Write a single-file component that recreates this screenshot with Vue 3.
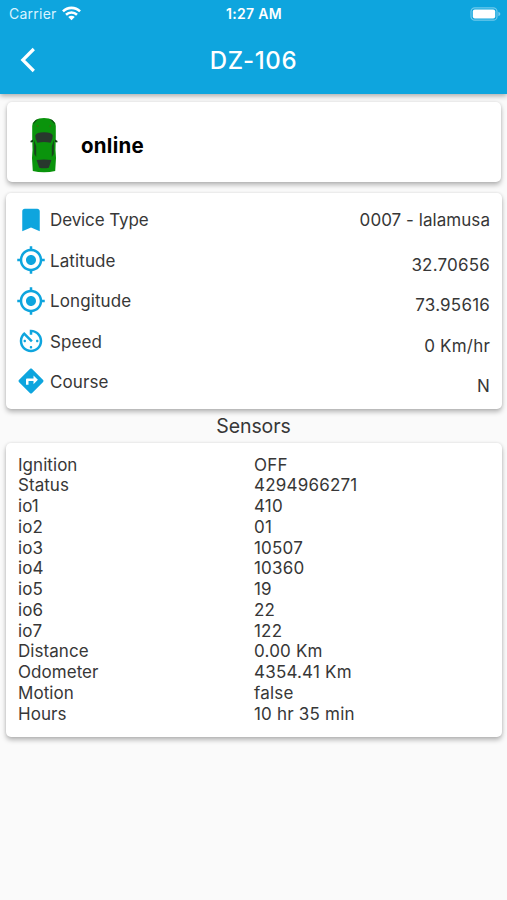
<script setup>
import { ref } from 'vue'

const device = ref({ name: 'DZ-106', status: 'online' })

const ICONS = {
  bookmark: 'M17 3H7c-1.1 0-1.99.9-1.99 2L5 21l7-3 7 3V5c0-1.1-.9-2-2-2z',
  gps: 'M12 8c-2.21 0-4 1.79-4 4s1.79 4 4 4 4-1.79 4-4-1.79-4-4-4zm8.94 3c-.46-4.17-3.77-7.48-7.94-7.94V1h-2v2.06C6.83 3.52 3.52 6.83 3.06 11H1v2h2.06c.46 4.17 3.77 7.48 7.94 7.94V23h2v-2.06c4.17-.46 7.48-3.77 7.94-7.94H23v-2h-2.06zM12 19c-3.87 0-7-3.13-7-7s3.13-7 7-7 7 3.13 7 7-3.13 7-7 7z',
  timer: 'M11 17c0 .55.45 1 1 1s1-.45 1-1-.45-1-1-1-1 .45-1 1zm0-14v4h2V5.08c3.39.49 6 3.39 6 6.92 0 3.87-3.13 7-7 7s-7-3.13-7-7c0-1.68.59-3.22 1.58-4.42L12 13l1.41-1.41-6.8-6.8v.02C4.42 6.45 3 9.05 3 12c0 4.97 4.02 9 9 9 4.97 0 9-4.03 9-9s-4.03-9-9-9h-1zm7 9c0-.55-.45-1-1-1s-1 .45-1 1 .45 1 1 1 1-.45 1-1zM6 12c0 .55.45 1 1 1s1-.45 1-1-.45-1-1-1-1 .45-1 1z',
  directions: 'M21.71 11.29l-9-9c-.39-.39-1.02-.39-1.41 0l-9 9c-.39.39-.39 1.02 0 1.41l9 9c.39.39 1.02.39 1.41 0l9-9c.39-.38.39-1.01 0-1.41zM14 14.5V12h-4v3H8v-4c0-.55.45-1 1-1h5V7.5l3.5 3.5-3.5 3.5z'
}

const details = ref([
  { label: 'Device Type', value: '0007 - lalamusa', icon: ICONS.bookmark },
  { label: 'Latitude', value: '32.70656', icon: ICONS.gps },
  { label: 'Longitude', value: '73.95616', icon: ICONS.gps },
  { label: 'Speed', value: '0 Km/hr', icon: ICONS.timer },
  { label: 'Course', value: 'N', icon: ICONS.directions }
])

const sensors = ref([
  { label: 'Ignition', value: 'OFF' },
  { label: 'Status', value: '4294966271' },
  { label: 'io1', value: '410' },
  { label: 'io2', value: '01' },
  { label: 'io3', value: '10507' },
  { label: 'io4', value: '10360' },
  { label: 'io5', value: '19' },
  { label: 'io6', value: '22' },
  { label: 'io7', value: '122' },
  { label: 'Distance', value: '0.00 Km' },
  { label: 'Odometer', value: '4354.41 Km' },
  { label: 'Motion', value: 'false' },
  { label: 'Hours', value: '10 hr 35 min' }
])
</script>

<template>
  <div class="screen">
    <header class="app-bar">
      <div class="status-bar">
        <div class="carrier">
          <span>Carrier</span>
          <svg class="wifi" viewBox="0 0 18 14">
            <g fill="none" stroke="#fff" stroke-width="2.4">
              <path d="M.9 5 A11.5 11.5 0 0 1 17.1 5" />
              <path d="M3.8 8.2 A7.5 7.5 0 0 1 14.2 8.2" />
            </g>
            <path d="M5.9 10.3 A4.4 4.4 0 0 1 12.1 10.3 L9 13.3 Z" fill="#fff" />
          </svg>
        </div>
        <span class="clock">1:27 AM</span>
        <div class="battery-wrap">
          <svg class="battery" viewBox="0 0 31 14">
            <rect x="1" y="0.8" width="26" height="12.4" rx="3.8" fill="none" stroke="#fff" stroke-opacity="0.4" stroke-width="1.2" />
            <rect x="2.8" y="2.5" width="22.4" height="9" rx="2" fill="#fff" />
            <path d="M28.4 4.8 q2 .8 2 2.2 t-2 2.2z" fill="#fff" fill-opacity="0.45" />
          </svg>
        </div>
      </div>
      <div class="title-bar">
        <svg class="back" viewBox="0 0 16 26">
          <path d="M13.8 2 L2.8 13 L13.8 24" fill="none" stroke="#fff" stroke-width="3.2" />
        </svg>
        <h1>{{ device.name }}</h1>
      </div>
    </header>

    <main>
      <section class="card state-card">
        <svg class="car" viewBox="0 0 28 56">
          <path d="M2.2 9 Q3 1 14 1 Q25 1 25.8 9 L25.8 20 L25.5 33 L26 41 L25.2 54 Q20 55.2 14 55.2 Q8 55.2 2.8 54 L2 41 L2.5 33 L2.2 20 Z" fill="#0a940c" />
          <path d="M3 7.5 Q4 3 8.4 2 Q5.5 4.2 3 7.5 Z M25 7.5 Q24 3 19.6 2 Q22.5 4.2 25 7.5 Z" fill="#153b18" />
          <path d="M5.2 18.5 Q6.5 15.2 14 15.2 Q21.5 15.2 22.8 18.5 Q22.8 22.5 20.6 25.8 Q14 24.4 7.4 25.8 Q5.2 22.5 5.2 18.5 Z" fill="#28382d" />
          <path d="M4 23 L6.2 29 L6.2 40 L4.2 37 Z M24 23 L21.8 29 L21.8 40 L23.8 37 Z" fill="#17441b" />
          <path d="M6.6 43 Q14 42 21.4 43 L18.8 50.8 Q14 51.8 9.2 50.8 Z" fill="#28382d" />
          <path d="M3 22.5 L.4 24 L.8 25.4 L3 25 Z M25 22.5 L27.6 24 L27.2 25.4 L25 25 Z" fill="#123d15" />
          <path d="M7 8.5 l1.4 1 M21 8.5 l-1.4 1" stroke="#4b6310" stroke-width="1.3" />
        </svg>
        <strong>{{ device.status }}</strong>
      </section>

      <section class="card details-card">
        <div v-for="item in details" :key="item.label" class="detail-row">
          <svg class="icon" viewBox="0 0 24 24"><path :d="item.icon" /></svg>
          <span class="label">{{ item.label }}</span>
          <span class="value">{{ item.value }}</span>
        </div>
      </section>

      <h2>Sensors</h2>

      <section class="card sensors-card">
        <div v-for="sensor in sensors" :key="sensor.label" class="sensor-row">
          <span>{{ sensor.label }}</span>
          <span class="reading">{{ sensor.value }}</span>
        </div>
      </section>
    </main>
  </div>
</template>

<style>
body {
  margin: 0;
  background: #fafafa;
}
</style>

<style scoped>
.screen {
  height: 900px;
  overflow: hidden;
  background: #fafafa;
  font-family: Inter, "Liberation Sans", sans-serif;
  font-size: 17px;
  letter-spacing: 0.05px;
  color: #373737;
}

.app-bar {
  height: 94px;
  background: #0ea5de;
  color: #fff;
  box-shadow: 0 2px 5px rgba(0, 0, 0, 0.32);
}

.status-bar {
  display: grid;
  grid-template-columns: 1fr auto 1fr;
  align-items: center;
  height: 27px;
  padding: 0 6px 0 9px;
  font-size: 14px;
}

.carrier {
  display: flex;
  align-items: center;
  gap: 5px;
  letter-spacing: 0.25px;
  color: #d9f3ff;
}

.wifi {
  width: 19px;
  height: 15px;
}

.clock {
  margin-right: 2px;
  font-size: 14px;
  font-weight: 600;
  letter-spacing: 0.3px;
}

.battery-wrap {
  display: flex;
  justify-content: flex-end;
}

.battery {
  width: 31px;
  height: 14px;
}

.title-bar {
  display: grid;
  grid-template-columns: 40px 1fr 40px;
  align-items: center;
  height: 66px;
  padding: 0 20px;
}

.back {
  width: 16px;
  height: 26px;
}

h1 {
  margin: 0;
  text-align: center;
  font-size: 24px;
  font-weight: 500;
  letter-spacing: 0.65px;
}

.card {
  margin: 0 5px 0 6px;
  box-sizing: border-box;
  background: #fff;
  border-radius: 5px;
  box-shadow: 0 3px 5px rgba(0, 0, 0, 0.27), 0 0 3px rgba(0, 0, 0, 0.1);
}

.state-card {
  display: flex;
  align-items: center;
  gap: 23px;
  height: 80px;
  margin: 8px 6px 11px 7px;
  padding: 6px 22px 0 23px;
}

.car {
  width: 28px;
  height: 56px;
}

.state-card strong {
  font-size: 20.5px;
  font-weight: 700;
  letter-spacing: 0.25px;
  color: #000;
}

.details-card {
  height: 216px;
  padding: 7px 12px 0 10px;
}

.detail-row {
  display: flex;
  align-items: center;
  height: 40.3px;
}

.icon {
  width: 30px;
  height: 30px;
  margin-right: 4px;
  fill: #0ea5de;
}

.label {
  letter-spacing: -0.1px;
}

.value {
  margin-left: auto;
}

.detail-row + .detail-row .value {
  padding-top: 9px;
  letter-spacing: 0.2px;
}

.detail-row + .detail-row .label {
  padding-top: 1px;
  letter-spacing: 0.1px;
}

h2 {
  margin: 0;
  height: 34px;
  line-height: 34px;
  text-align: center;
  font-size: 19.5px;
  font-weight: 400;
  letter-spacing: -0.1px;
}

.sensors-card {
  height: 294px;
  padding: 11.5px 12px;
}

.sensor-row {
  display: grid;
  grid-template-columns: 1fr 1fr;
  height: 20.75px;
  line-height: 20.75px;
}

.reading {
  letter-spacing: 0.2px;
}
</style>
